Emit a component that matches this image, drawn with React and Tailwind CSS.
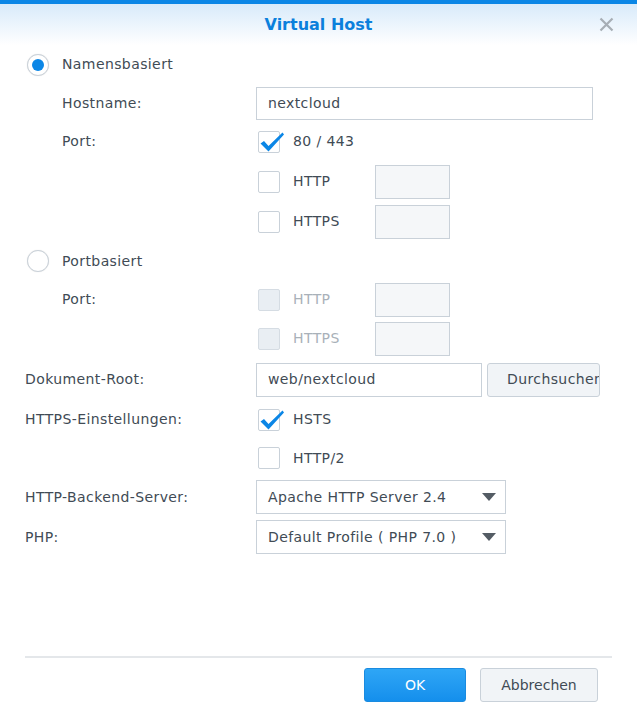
import React from "react";

const Check = () => (
  <svg className="absolute left-0 top-[-2px]" width="28" height="26" viewBox="0 0 28 26">
    <path d="M2.5 14.5 L6 12 L10.5 17 L24.5 3.5 L26 5.5 L10.5 22.5 Z" fill="#0b86e6" />
  </svg>
);

const Checkbox = ({ checked, disabled }) => (
  <div className="relative w-[22px] h-[22px] shrink-0">
    <div
      className={
        disabled
          ? "w-[22px] h-[22px] rounded-[2px] border border-[#d5dce3] bg-[#e9eef3]"
          : "w-[22px] h-[22px] rounded-[2px] border border-[#c9d1d9] bg-white"
      }
    />
    {checked && <Check />}
  </div>
);

const Radio = ({ checked }) => (
  <div className="w-[22px] h-[22px] rounded-full border border-[#c9d1d9] bg-white flex items-center justify-center shadow-[0_0_1px_rgba(0,0,0,0.15)]">
    {checked && <div className="w-[12px] h-[12px] rounded-full bg-[#0b86e6]" />}
  </div>
);

const Caret = () => (
  <svg width="14" height="8" viewBox="0 0 14 8" className="shrink-0">
    <path d="M0 0 H14 L7 8 Z" fill="#545c64" />
  </svg>
);

const Row = ({ h, label, indent, children }) => (
  <div className={`flex items-center ${h}`}>
    <div className={indent ? "w-[256px] pl-[62px]" : "w-[256px] pl-[25px]"}>{label}</div>
    <div className="flex items-center">{children}</div>
  </div>
);

const CheckItem = ({ checked, disabled, text, withBox }) => (
  <div className="flex items-center pl-[2px]">
    <Checkbox checked={checked} disabled={disabled} />
    <span className={`ml-[13px] w-[82px] ${disabled ? "text-[#a9b1b9]" : ""}`}>{text}</span>
    {withBox && (
      <div className="w-[75px] h-[34px] border border-[#c9d1d9] bg-[#f5f7f9]" />
    )}
  </div>
);

export default function App() {
  return (
    <div className="w-[637px] h-[713px] bg-white overflow-hidden text-[14px] tracking-[0.4px] text-[#414b55] font-['DejaVu_Sans',Verdana,sans-serif]">
      <div className="h-[4px] bg-[#0a86e6]" />
      <div className="relative h-[41px] bg-gradient-to-b from-[#d8eafa] to-white flex items-center justify-center">
        <span className="text-[16px] tracking-normal font-bold text-[#0b80dc]">Virtual Host</span>
        <svg className="absolute right-[23px] top-[13px]" width="15" height="15" viewBox="0 0 15 15">
          <path d="M1.5 1.5 L13.5 13.5 M13.5 1.5 L1.5 13.5" stroke="#a7aeb5" strokeWidth="2.2" />
        </svg>
      </div>

      <div className="flex flex-col">
        <div className="flex items-center h-[39px] pl-[27px]">
          <Radio checked />
          <span className="ml-[13px]">Namensbasiert</span>
        </div>
        <Row h="h-[38px]" label="Hostname:" indent>
          <div className="w-[337px] h-[33px] border border-[#c9d1d9] flex items-center pl-[11px]">nextcloud</div>
        </Row>
        <Row h="h-[39px]" label="Port:" indent>
          <CheckItem checked text="80 / 443" />
        </Row>
        <Row h="h-[41px]" indent>
          <CheckItem text="HTTP" withBox />
        </Row>
        <Row h="h-[39px]" indent>
          <CheckItem text="HTTPS" withBox />
        </Row>
        <div className="flex items-center h-[40px] pl-[27px]">
          <Radio />
          <span className="ml-[13px]">Portbasiert</span>
        </div>
        <Row h="h-[37px]" label="Port:" indent>
          <CheckItem disabled text="HTTP" withBox />
        </Row>
        <Row h="h-[41px]" indent>
          <CheckItem disabled text="HTTPS" withBox />
        </Row>
        <Row h="h-[41px]" label="Dokument-Root:">
          <div className="w-[226px] h-[34px] border border-[#c9d1d9] flex items-center pl-[11px]">web/nextcloud</div>
          <div className="ml-[5px] w-[113px] h-[34px] rounded-[3px] border border-[#c9d1d9] bg-[#f1f4f7] overflow-hidden whitespace-nowrap flex items-center pl-[19px]">
            Durchsuchen
          </div>
        </Row>
        <Row h="h-[39px]" label="HTTPS-Einstellungen:">
          <CheckItem checked text="HSTS" />
        </Row>
        <Row h="h-[38px]">
          <CheckItem text="HTTP/2" />
        </Row>
        <Row h="h-[40px]" label="HTTP-Backend-Server:">
          <div className="w-[250px] h-[34px] border border-[#c9d1d9] flex items-center justify-between pl-[11px] pr-[9px]">
            <span>Apache HTTP Server 2.4</span>
            <Caret />
          </div>
        </Row>
        <Row h="h-[40px]" label="PHP:">
          <div className="w-[250px] h-[34px] border border-[#c9d1d9] flex items-center justify-between pl-[11px] pr-[9px]">
            <span>Default Profile ( PHP 7.0 )</span>
            <Caret />
          </div>
        </Row>
      </div>

      <div className="h-[99px]" />
      <div className="mx-[25px] h-[2px] bg-[#e4e7ea]" />
      <div className="flex justify-end gap-[14px] pr-[39px] pt-[10px]">
        <button className="w-[102px] h-[34px] rounded-[3px] border border-[#1a8be0] bg-gradient-to-b from-[#2ea6f6] to-[#148fec] text-white tracking-normal">
          OK
        </button>
        <button className="w-[118px] h-[34px] rounded-[3px] border border-[#c9d1d9] bg-[#f1f4f7] text-[#414b55] tracking-normal">
          Abbrechen
        </button>
      </div>
    </div>
  );
}
